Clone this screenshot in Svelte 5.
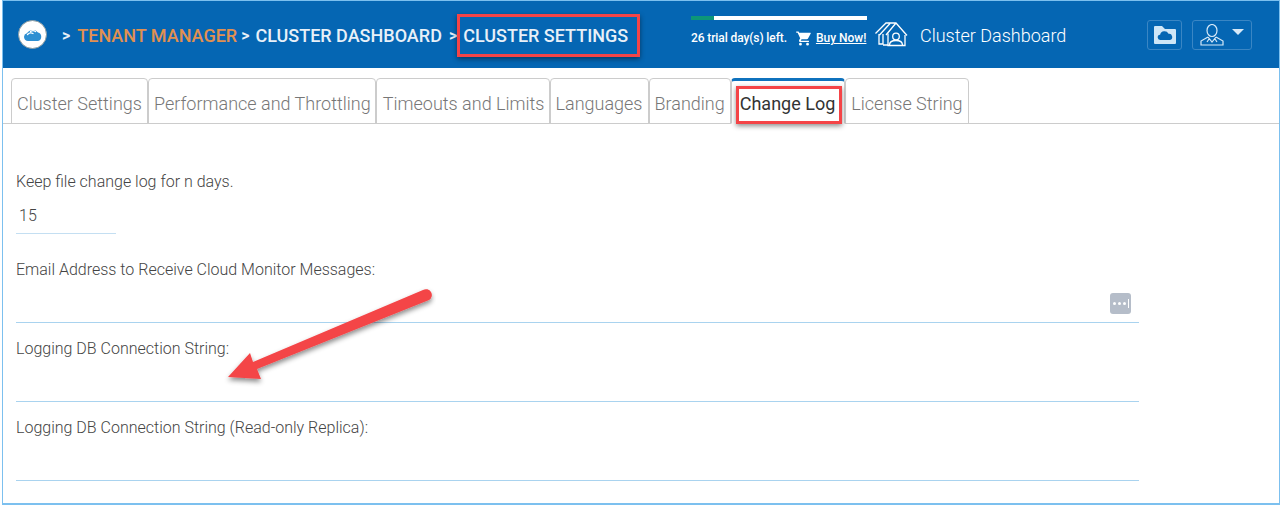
<script>
    const tabs = ['Cluster Settings', 'Performance and Throttling', 'Timeouts and Limits', 'Languages', 'Branding', 'Change Log', 'License String'];
    const activeTab = 'Change Log';
</script>

<div class="frame">
    <header class="topbar">
        <div class="logo">
            <svg width="18" height="13" viewBox="0 0 18 13">
                <path d="M4 13A4 4 0 0 1 2.800 5.200 7 7 0 0 1 14 4.500 4.400 4.400 0 0 1 14 13z" fill="#2e8fd2"/>
                <path d="M3.500 6.500q2.500-2.500 5.500-1M6.500 3.500q2.500-1.800 5 0" stroke="#fff" stroke-width="1.300" fill="none" stroke-linecap="round"/>
            </svg>
        </div>
        <nav class="crumbs">
            <span class="sep">&gt;</span>
            <span class="tenant">TENANT MANAGER</span>
            <span class="sep second">&gt;</span>
            <span class="crumb">CLUSTER DASHBOARD</span>
            <span class="sep third">&gt;</span>
            <span class="crumb current">CLUSTER SETTINGS</span>
        </nav>
        <div class="trial">
            <div class="progress"><div class="progress-used"></div></div>
            <div class="trial-row">
                <span>26 trial day(s) left.</span>
                <svg class="cart" width="18" height="17" viewBox="0 0 24 24">
                    <path fill="#fff" d="M7 18a2 2 0 1 0 0 4 2 2 0 0 0 0-4zM1 2v2h2l3.600 7.600-1.400 2.400c-.7 1.300.3 3 1.800 3h12v-2H7.400l1.100-2h7.500c.7 0 1.400-.4 1.700-1L21.500 5c.4-.7-.1-1-.9-1H5.200l-.9-2zm16 16a2 2 0 1 0 0 4 2 2 0 0 0 0-4z"/>
                </svg>
                <span class="buy">Buy Now!</span>
            </div>
        </div>
        <svg class="houses" width="33" height="25" viewBox="0 0 33 25" fill="none" stroke="#fff" stroke-width="1.300">
            <path d="M.5 11.500 11 1h10l11 12.500M11 13 21 1M4.500 13 15 1.500M4 12v10h4V12M8 23h5"/>
            <path d="M13 11.500v12h17V13"/>
            <circle cx="21" cy="14.500" r="3.300"/>
            <path d="M14.500 23q0-4.500 6.500-4.500t6.500 4.500"/>
        </svg>
        <span class="title">Cluster Dashboard</span>
        <button class="icon-btn folder" aria-label="Files">
            <svg width="22" height="18" viewBox="0 0 22 18">
                <path fill="#cfe6f7" d="M0 1a1 1 0 0 1 1-1h7l3 3h10a1 1 0 0 1 1 1v13a1 1 0 0 1-1 1H1a1 1 0 0 1-1-1z"/>
                <path fill="#0566b3" d="M6.500 14a2.600 2.600 0 0 1-.4-5.200 4.500 4.500 0 0 1 8.400-1 3.200 3.200 0 0 1 1.500 6.200z"/>
            </svg>
        </button>
        <button class="icon-btn user" aria-label="Account">
            <svg width="24" height="22" viewBox="0 0 24 22" fill="none" stroke="#d7e9f8" stroke-width="1.200">
                <ellipse cx="12" cy="6.500" rx="5" ry="6"/>
                <path d="M8 13 1 17v4h22v-4l-7-4M8 13l4 5 4-5M9 15l-2 3M15 15l2 3"/>
            </svg>
            <span class="caret"></span>
        </button>
    </header>

    <div class="tabs">
        {#each tabs as tab}
            <div class="tab" class:active={tab === activeTab}>{tab}</div>
        {/each}
    </div>

    <main class="form">
        <div class="field days">
            <div class="label">Keep file change log for n days.</div>
            <div class="input short">15</div>
        </div>
        <div class="field email">
            <div class="label">Email Address to Receive Cloud Monitor Messages:</div>
            <div class="input">
                <span class="more"><i></i><i></i><i></i><b></b></span>
            </div>
        </div>
        <div class="field">
            <div class="label">Logging DB Connection String:</div>
            <div class="input"></div>
        </div>
        <div class="field">
            <div class="label">Logging DB Connection String (Read-only Replica):</div>
            <div class="input"></div>
        </div>
    </main>

    <!-- annotations drawn over the screenshot -->
    <div class="callout callout-title"></div>
    <div class="callout callout-tab"></div>
    <svg class="arrow" width="235" height="110" viewBox="0 0 235 110">
        <defs>
            <filter id="arrow-shadow" x="-10%" y="-20%" width="120%" height="150%">
                <feDropShadow dx="0" dy="3" stdDeviation="2.500" flood-color="#000" flood-opacity="0.45"/>
            </filter>
        </defs>
        <path filter="url(#arrow-shadow)" fill="#f44447" d="M222 3A5 5 0 0 1 228 13L56 82 60 92 27 90 49 66 52 75z"/>
    </svg>
</div>

<style>
    :global(body) {
        margin: 0;
        background: #fff;
        font-family: Roboto, "Liberation Sans", sans-serif;
    }
    .frame {
        position: relative;
        box-sizing: border-box;
        width: 1278px;
        height: 505px;
        margin-left: 2px;
        border: 1px solid #7cc0ef;
        border-bottom-width: 2px;
        overflow: hidden;
        background: #fff;
    }
    .topbar {
        display: flex;
        align-items: center;
        height: 67px;
        padding-left: 15px;
        background: #0566b3;
        color: #fff;
    }
    .logo {
        display: flex;
        align-items: center;
        justify-content: center;
        box-sizing: border-box;
        width: 29px;
        height: 29px;
        border-radius: 50%;
        background: #fff;
        border: 1px solid #8a9aa0;
    }
    .crumbs {
        display: flex;
        align-items: center;
        width: 629px;
        margin: 2px 0 0 15px;
        font-size: 18px;
        font-weight: 500;
        white-space: nowrap;
        color: #e8f0f8;
    }
    .sep {
        font-size: 16px;
        font-weight: 700;
        margin-right: 7px;
    }
    .second {
        margin-left: 4px;
        margin-right: 6px;
    }
    .third {
        margin-left: 7px;
        margin-right: 6px;
    }
    .tenant {
        color: #e19050;
    }
    .trial {
        display: flex;
        flex-direction: column;
        width: 176px;
        margin-top: -7px;
    }
    .progress {
        height: 4px;
        background: #fff;
        margin-bottom: 10px;
    }
    .progress-used {
        width: 23px;
        height: 100%;
        background: #0d9678;
    }
    .trial-row {
        display: flex;
        align-items: center;
        font-size: 12px;
        font-weight: 500;
        letter-spacing: -0.1px;
        white-space: nowrap;
    }
    .cart {
        margin: 0 3px 0 8px;
    }
    .buy {
        letter-spacing: 0;
        text-decoration: underline;
    }
    .houses {
        margin: 0 0 0 8px;
    }
    .title {
        width: 227px;
        margin: 2px 0 0 12px;
        font-size: 18px;
        font-weight: 300;
        white-space: nowrap;
    }
    .icon-btn {
        display: flex;
        align-items: center;
        justify-content: center;
        box-sizing: border-box;
        height: 30px;
        padding: 0;
        background: transparent;
        border: 1px solid #3a86c4;
        border-radius: 3px;
    }
    .folder {
        width: 35px;
    }
    .user {
        width: 60px;
        margin-left: 10px;
        gap: 8px;
    }
    .caret {
        margin-bottom: 6px;
        border-left: 6px solid transparent;
        border-right: 6px solid transparent;
        border-top: 6px solid #d7e9f8;
    }
    .tabs {
        display: flex;
        align-items: flex-end;
        box-sizing: border-box;
        height: 56px;
        padding-left: 8px;
        border-bottom: 1px solid #ccc;
    }
    .tab {
        box-sizing: border-box;
        height: 46px;
        margin-bottom: -1px;
        padding: 12px 5px 0 5px;
        border: 1px solid #ccc;
        border-bottom-color: #ccc;
        border-radius: 4px 4px 0 0;
        font-size: 18px;
        font-weight: 300;
        line-height: 26px;
        color: #777;
        white-space: nowrap;
    }
    .tab:nth-child(2) {
        padding-right: 4px;
    }
    .tab:nth-child(3) {
        padding-left: 6px;
        padding-right: 4px;
    }
    .tab.active {
        padding: 10px 9px 0 8px;
        border-top: 3px solid #0f72bd;
        border-bottom-color: #fff;
        color: #333;
        font-weight: 400;
    }
    .form {
        padding: 47px 0 0 13px;
        width: 1123px;
        box-sizing: content-box;
    }
    .field {
        display: flex;
        flex-direction: column;
        margin-bottom: 15px;
    }
    .days {
        margin-bottom: 25px;
    }
    .email {
        margin-bottom: 15px;
    }
    .label {
        height: 20px;
        font-size: 16px;
        font-weight: 300;
        line-height: 22px;
        color: #444;
    }
    .input {
        position: relative;
        box-sizing: border-box;
        height: 44px;
        border-bottom: 1px solid #a9d3ef;
    }
    .short {
        width: 100px;
        height: 43px;
        padding: 15px 0 0 3px;
        font-size: 16px;
        font-weight: 300;
        line-height: 20px;
        color: #444;
        border-bottom-color: #c4dff2;
    }
    .email .input {
        display: flex;
        justify-content: flex-end;
        height: 44px;
    }
    .more {
        display: flex;
        align-items: center;
        justify-content: center;
        gap: 2px;
        width: 21px;
        height: 21px;
        margin: 14px 8px 0 0;
        border-radius: 3px;
        background: #b5bdc9;
    }
    .more i {
        width: 3px;
        height: 3px;
        border-radius: 50%;
        background: #fff;
    }
    .more b {
        width: 1px;
        height: 9px;
        background: #fff;
    }
    .callout {
        position: absolute;
        box-sizing: border-box;
        border: 3px solid #f44447;
        box-shadow: 0 2px 5px rgba(0, 0, 0, 0.45);
    }
    .callout-title {
        left: 454px;
        top: 13px;
        width: 183px;
        height: 43px;
    }
    .callout-tab {
        left: 733px;
        top: 85px;
        width: 106px;
        height: 38px;
    }
    .arrow {
        position: absolute;
        left: 198px;
        top: 286px;
    }
</style>
